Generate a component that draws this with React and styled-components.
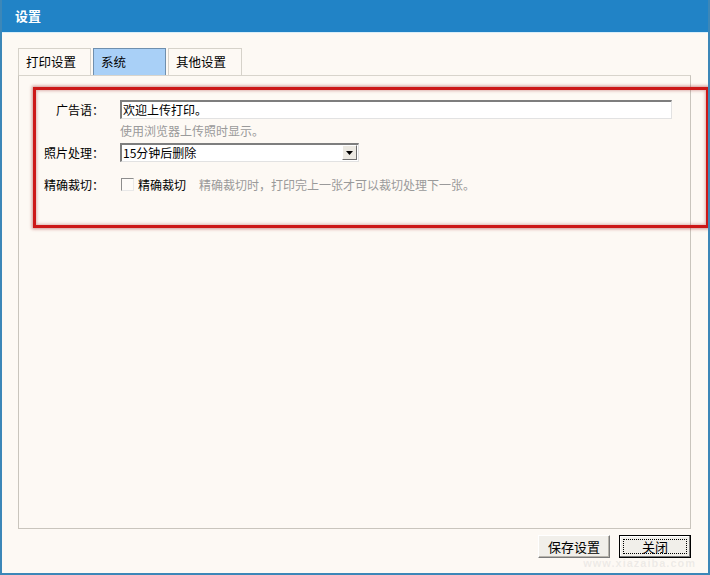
import React from 'react';
import styled, { createGlobalStyle } from 'styled-components';

const GlobalStyle = createGlobalStyle`
  html, body {
    margin: 0;
    padding: 0;
    background: #fdf9f4;
  }
  body {
    font-family: "Noto Sans CJK SC", "Noto Sans", sans-serif;
    font-size: 12px;
    color: #000;
  }
`;

const Window = styled.div`
  position: relative;
  width: 710px;
  height: 575px;
  box-sizing: border-box;
  display: flex;
  flex-direction: column;
  background: #fdf9f4;
  border-left: 2px solid #3c87b8;
  border-right: 2px solid #3c87b8;
  border-bottom: 2px solid #3c87b8;
  overflow: hidden;
`;

const TitleBar = styled.div`
  height: 32px;
  margin: 0 -2px;
  background: #2183c6;
  border-bottom: 1px solid #d9eef9;
  color: #fff;
  font-size: 13px;
  font-weight: bold;
  line-height: 32px;
  padding-left: 15px;
  flex-shrink: 0;
`;

const Body = styled.div`
  flex: 1;
  display: flex;
  flex-direction: column;
  padding: 15px 17px 0 16px;
`;

const Tabs = styled.div`
  display: flex;
  gap: 2px;
  height: 27px;
`;

const Tab = styled.div`
  width: ${p => p.$w}px;
  box-sizing: border-box;
  height: 27px;
  padding: 6px 0 0 7px;
  line-height: 14px;
  font-size: 12.5px;
  background: ${p => (p.$active ? '#a9d0f7' : '#fdf9f4')};
  border: 1px solid ${p => (p.$active ? '#6f8fae' : '#d6d2ca')};
  border-bottom: none;
  color: #000;
`;

const Panel = styled.div`
  height: 454px;
  box-sizing: border-box;
  border: 1px solid #c9c5bd;
  border-top-color: #d8d4cc;
  padding-top: 24px;
`;

const Row = styled.div`
  display: flex;
  align-items: center;
  margin-top: ${p => p.$mt || 0}px;
`;

const Label = styled.div`
  width: 85px;
  text-align: right;
  margin-right: 16px;
  white-space: nowrap;
`;

const TextInput = styled.div`
  width: 552px;
  height: 19px;
  box-sizing: border-box;
  background: #fff;
  border-top: 2px solid #7e7e7e;
  border-left: 2px solid #7e7e7e;
  border-right: 1px solid #e2e2e2;
  border-bottom: 1px solid #e2e2e2;
  padding-left: 1px;
  line-height: 16px;
`;

const Hint = styled.div`
  color: #9a9a9a;
  margin-left: ${p => p.$ml || 0}px;
  line-height: 14px;
`;

const Select = styled.div`
  width: 239px;
  height: 19px;
  box-sizing: border-box;
  display: flex;
  background: #fff;
  border-top: 2px solid #7e7e7e;
  border-left: 2px solid #7e7e7e;
  border-right: 1px solid #e2e2e2;
  border-bottom: 1px solid #e2e2e2;
`;

const SelectText = styled.div`
  flex: 1;
  padding-left: 1px;
  line-height: 16px;
`;

const SelectArrow = styled.div`
  width: 15px;
  height: 15px;
  margin: 0 1px 0 0;
  box-sizing: border-box;
  background: #ece9e2;
  border-top: 1px solid #fff;
  border-left: 1px solid #fff;
  border-right: 1px solid #6e6e6e;
  border-bottom: 1px solid #6e6e6e;
  display: flex;
  align-items: center;
  justify-content: center;
`;

const Check = styled.div`
  width: 13px;
  height: 13px;
  box-sizing: border-box;
  border-top: 1px solid #8d8d8d;
  border-left: 1px solid #8d8d8d;
  border-right: 1px solid #e8e8e8;
  border-bottom: 1px solid #e8e8e8;
  background: #fdfbf8;
  margin-left: 1px;
  margin-right: 4px;
`;

const Footer = styled.div`
  display: flex;
  justify-content: flex-end;
  gap: 9px;
  padding-top: 6px;
`;

const Button = styled.div`
  width: 72px;
  height: 23px;
  box-sizing: border-box;
  display: flex;
  align-items: center;
  justify-content: center;
  background: #f1efea;
  border: 1px solid;
  border-color: ${p => (p.$focus ? '#000' : '#fff #7a7a7a #7a7a7a #fff')};
  box-shadow: ${p => (p.$focus ? 'inset -1px -1px 0 #7a7a7a, inset 1px 1px 0 #fff' : 'inset -1px -1px 0 #b8b5ad')};
  font-size: 13px;
  position: relative;
`;

const FocusRing = styled.span`
  position: absolute;
  inset: 3px;
  border: 1px dotted #000;
`;

const Highlight = styled.div`
  position: absolute;
  left: 31px;
  top: 87px;
  width: 676px;
  height: 141px;
  box-sizing: border-box;
  border: 3px solid #cc1818;
  box-shadow: 0 0 3px 1px rgba(150, 20, 20, 0.45), inset 0 0 3px 1px rgba(150, 20, 20, 0.3);
  pointer-events: none;
`;

const Watermark = styled.div`
  position: absolute;
  right: 12px;
  bottom: 4px;
  color: rgba(180, 180, 180, 0.22);
  font-family: "Liberation Sans", sans-serif;
  font-size: 11px;
  font-weight: bold;
  letter-spacing: 1px;
  pointer-events: none;
`;

const App = () => {
  return (
    <>
      <GlobalStyle />
      <Window>
        <TitleBar>设置</TitleBar>
        <Body>
          <Tabs>
            <Tab $w={73}>打印设置</Tab>
            <Tab $w={73} $active>系统</Tab>
            <Tab $w={74}>其他设置</Tab>
          </Tabs>
          <Panel>
            <Row>
              <Label>广告语：</Label>
              <TextInput>欢迎上传打印。</TextInput>
            </Row>
            <Row $mt={5}>
              <Hint $ml={101}>使用浏览器上传照时显示。</Hint>
            </Row>
            <Row $mt={5}>
              <Label>照片处理：</Label>
              <Select>
                <SelectText>15分钟后删除</SelectText>
                <SelectArrow>
                  <svg width="7" height="4" viewBox="0 0 7 4">
                    <path d="M0 0h7L3.5 4z" fill="#000" />
                  </svg>
                </SelectArrow>
              </Select>
            </Row>
            <Row $mt={14}>
              <Label>精确裁切：</Label>
              <Check />
              <span>精确裁切</span>
              <Hint $ml={13}>精确裁切时，打印完上一张才可以裁切处理下一张。</Hint>
            </Row>
          </Panel>
          <Footer>
            <Button>保存设置</Button>
            <Button $focus>
              <FocusRing />
              关闭
            </Button>
          </Footer>
        </Body>
        <Highlight />
        <Watermark>www.xiazaiba.com</Watermark>
      </Window>
    </>
  );
};

export default App;
